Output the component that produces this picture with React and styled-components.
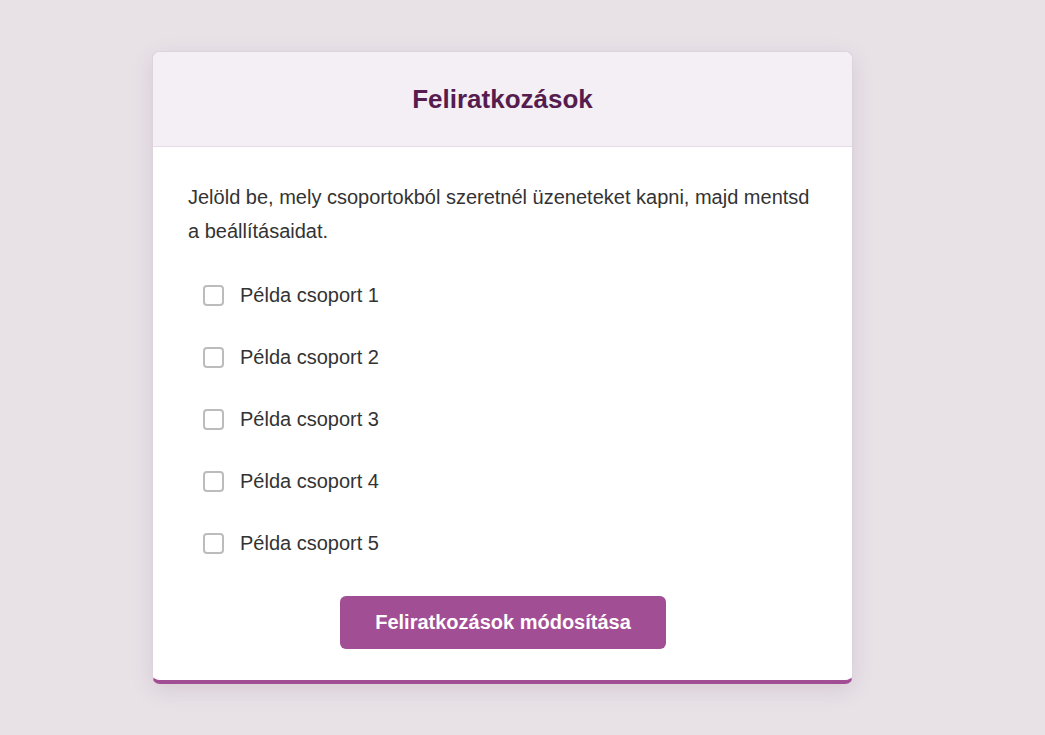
import React from "react";
import styled, { createGlobalStyle } from "styled-components";

const GlobalStyle = createGlobalStyle`
  html, body {
    margin: 0;
    padding: 0;
    background: #e8e2e7;
    font-family: "Liberation Sans", Arial, sans-serif;
  }
`;

const Page = styled.div`
  display: flex;
  align-items: flex-start;
  justify-content: center;
  padding: 51px 40px 40px 0;
  min-height: 735px;
  box-sizing: border-box;
`;

const Card = styled.section`
  width: 701px;
  background: #ffffff;
  border: 1px solid #ddd3dc;
  border-bottom: 4px solid #a24e94;
  border-radius: 8px;
  box-shadow: 0 6px 22px rgba(90, 40, 80, 0.12);
  overflow: hidden;
  box-sizing: border-box;
`;

const Header = styled.header`
  height: 95px;
  display: flex;
  align-items: center;
  justify-content: center;
  background: #f4eff5;
  border-bottom: 1px solid #e6dce6;
  box-sizing: border-box;

  h2 {
    margin: 0;
    font-size: 26px;
    font-weight: 700;
    color: #561c4e;
  }
`;

const Body = styled.div`
  padding: 33px 34px 31px 35px;
`;

const Intro = styled.p`
  margin: 0 0 16px;
  font-size: 20px;
  line-height: 34px;
  color: #333333;
`;

const List = styled.div`
  display: flex;
  flex-direction: column;
  padding-left: 15px;
`;

const Row = styled.label`
  display: flex;
  align-items: center;
  gap: 16px;
  height: 62px;
  font-size: 20px;
  color: #333333;
  cursor: pointer;
`;

const Box = styled.input.attrs({ type: "checkbox" })`
  appearance: none;
  margin: 0;
  width: 21px;
  height: 21px;
  border: 2px solid #bcbcbc;
  border-radius: 4px;
  background: #fff;
  box-sizing: border-box;
  cursor: pointer;

  &:checked {
    background: #a24e94;
    border-color: #a24e94;
  }
`;

const Actions = styled.div`
  display: flex;
  justify-content: center;
  margin-top: 22px;
`;

const Button = styled.button`
  display: block;
  width: 326px;
  height: 53px;
  border: none;
  border-radius: 6px;
  background: #a24e94;
  color: #ffffff;
  font-family: "Liberation Sans", Arial, sans-serif;
  font-size: 20px;
  font-weight: 700;
  cursor: pointer;
`;

const groups = [
  "Példa csoport 1",
  "Példa csoport 2",
  "Példa csoport 3",
  "Példa csoport 4",
  "Példa csoport 5",
];

export default function App() {
  return (
    <>
      <GlobalStyle />
      <Page>
        <Card>
          <Header>
            <h2>Feliratkozások</h2>
          </Header>
          <Body>
            <Intro>
              Jelöld be, mely csoportokból szeretnél üzeneteket kapni, majd mentsd
              a beállításaidat.
            </Intro>
            <List>
              {groups.map((name) => (
                <Row key={name}>
                  <Box />
                  {name}
                </Row>
              ))}
            </List>
            <Actions>
              <Button>Feliratkozások módosítása</Button>
            </Actions>
          </Body>
        </Card>
      </Page>
    </>
  );
}
